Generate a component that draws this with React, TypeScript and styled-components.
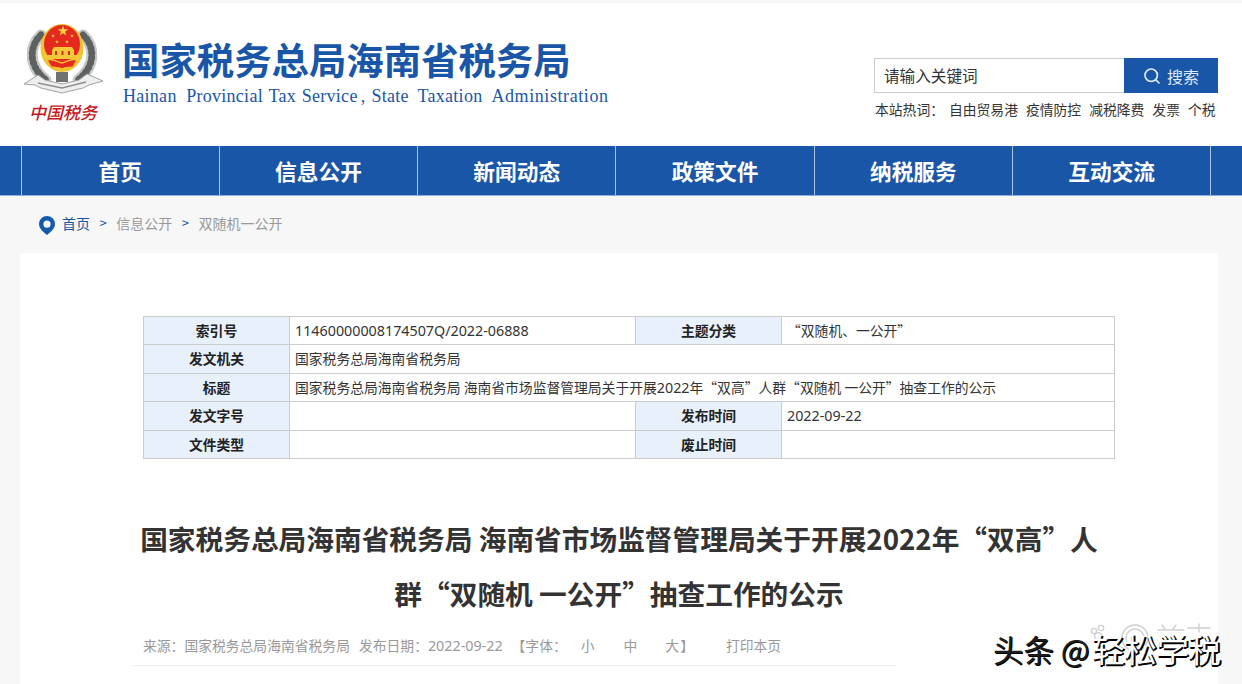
import React from 'react';
import styled, { createGlobalStyle } from 'styled-components';

const BLUE = '#1a56a8';
const FONT = '"Noto Sans CJK SC", "Noto Sans", sans-serif';

const GlobalStyle = createGlobalStyle`
  html, body {
    margin: 0;
    height: 684px;
    overflow: hidden;
    background: #f7f7f7;
    font-family: ${FONT};
  }
  * { box-sizing: border-box; }
`;

const Page = styled.div`
  position: relative;
  width: 1242px;
  height: 684px;
  overflow: hidden;
  padding-top: 3px;
`;

const Header = styled.header`
  height: 143px;
  background: #fff;
  display: flex;
  justify-content: space-between;
  padding: 17px 24px 0 21px;
`;

const Brand = styled.div`
  display: flex;
  gap: 17px;
`;

const LogoColumn = styled.div`
  width: 84px;
  display: flex;
  flex-direction: column;
  align-items: center;
`;

const LogoText = styled.div`
  font-size: 17px;
  line-height: 22px;
  font-weight: 500;
  font-style: italic;
  color: #c5181e;
  white-space: nowrap;
  margin-top: -1px;
`;

const BrandText = styled.div`
  padding-top: 16px;
`;

const BrandTitle = styled.div`
  font-size: 37.4px;
  line-height: 46px;
  font-weight: 700;
  color: ${BLUE};
  white-space: nowrap;
`;

const BrandSub = styled.div`
  font-family: "Liberation Serif", serif;
  font-size: 18px;
  line-height: 22px;
  letter-spacing: 0.28px;
  color: ${BLUE};
  white-space: nowrap;
  margin: 3px 0 0 1px;
`;

const SubPart = styled.span<{ $ws: number; $ls?: number; $left?: number; $right?: number }>`
  word-spacing: ${p => p.$ws}px;
  letter-spacing: ${p => p.$ls ?? 0.28}px;
  margin-left: ${p => p.$left ?? 0}px;
  margin-right: ${p => p.$right ?? 0}px;
`;

const SearchColumn = styled.div`
  width: 344px;
  padding-top: 38px;
`;

const SearchBox = styled.div`
  display: flex;
  height: 35px;
`;

const SearchInput = styled.div`
  flex: 1;
  border: 1px solid #ccc;
  border-right: none;
  font-size: 15.6px;
  line-height: 33px;
  padding-left: 9px;
  color: #333;
`;

const SearchButton = styled.div`
  width: 94px;
  background: ${BLUE};
  color: #dfe8f5;
  display: flex;
  align-items: center;
  justify-content: center;
  gap: 6px;
  font-size: 16px;
`;

const HotWords = styled.div`
  display: flex;
  margin-top: 6px;
  font-size: 13.8px;
  line-height: 20px;
  color: #333;
  white-space: nowrap;
`;

const HotLabel = styled.span`
  margin-left: 1px;
  margin-right: 5px;
`;

const HotWord = styled.span`
  margin-right: 8px;
`;

const Nav = styled.nav`
  height: 50px;
  background: ${BLUE};
  display: flex;
  padding-left: 20.5px;
  border-bottom: 1px solid #8fb0da;
`;

const NavItem = styled.div`
  width: 198.3px;
  border-left: 1px solid #a9c3e4;
  color: #fff;
  font-size: 21.7px;
  font-weight: 700;
  display: flex;
  align-items: center;
  justify-content: center;
  &:last-child {
    width: 31px;
  }
`;

const Breadcrumb = styled.div`
  height: 57px;
  display: flex;
  align-items: center;
  padding: 0 0 4px 39px;
  font-size: 14px;
  color: #999;
`;

const HomeLink = styled.span`
  color: ${BLUE};
  margin-left: 7px;
`;

const CrumbSep = styled.span`
  color: ${BLUE};
  margin: 0 9.5px;
  font-size: 13px;
`;

const PinSvg = styled.svg`
  margin-top: 6px;
`;

const Card = styled.main`
  margin: 0 24px 0 20px;
  height: 440px;
  background: #fff;
  padding: 63px 103px 0 113px;
`;

const InfoGrid = styled.div`
  display: grid;
  grid-template-columns: 146px 346px 146px 333px;
  grid-auto-rows: 28.4px;
  margin-left: 10px;
  width: 972px;
  border-top: 1px solid #ccc;
  border-left: 1px solid #ccc;
  font-size: 13.8px;
  color: #333;
`;

const Label = styled.div`
  background: #e8f0fc;
  border-right: 1px solid #ccc;
  border-bottom: 1px solid #ccc;
  text-align: center;
  font-weight: 700;
  line-height: 26px;
  color: #222;
`;

const Value = styled.div<{ $span?: number }>`
  grid-column: span ${p => p.$span ?? 1};
  border-right: 1px solid #ccc;
  border-bottom: 1px solid #ccc;
  padding-left: 5px;
  line-height: 27px;
  white-space: nowrap;
`;

const Num = styled.span`
  font-family: "Noto Sans", sans-serif;
  font-size: 14.3px;
`;

const Heading = styled.h1`
  margin: 52px 0 0;
  width: 972px;
  font-size: 27.7px;
  line-height: 55px;
  font-weight: 700;
  color: #333;
  text-align: center;
`;

const Meta = styled.div`
  margin-top: 4px;
  width: 763px;
  height: 41px;
  padding-left: 10px;
  display: flex;
  align-items: center;
  font-size: 13.8px;
  color: #999;
  border-bottom: 1px solid #eee;
  white-space: nowrap;
`;

const MetaItem = styled.span<{ $gap?: number }>`
  margin-right: ${p => p.$gap ?? 0}px;
`;

const Watermark = styled.div`
  position: absolute;
  left: 993px;
  top: 632px;
  font-size: 30.5px;
  line-height: 32px;
  font-weight: 400;
  color: #1d1d1d;
  white-space: nowrap;
  text-shadow: 1px 1px 0 #000, -1px -1px 0 #fff;
`;

const WatermarkName = styled.span`
  font-size: 32px;
  margin-left: 3px;
  color: #fff;
  text-shadow: 1px 1px 0 #000, 2px 1px 0 #000, 0 2px 0 #000;
`;

const WatermarkIcon = styled.svg`
  position: absolute;
  left: 1088px;
  top: 622px;
`;

const Star = ({ x, y, r }: { x: number; y: number; r: number }) => {
  const points = Array.from({ length: 10 }, (_, i) => {
    const a = (Math.PI / 5) * i - Math.PI / 2;
    const d = i % 2 ? r * 0.4 : r;
    return `${x + d * Math.cos(a)},${y + d * Math.sin(a)}`;
  }).join(' ');
  return <polygon points={points} fill="#f8d23c" />;
};

const Emblem = () => (
  <svg width="84" height="82" viewBox="0 0 84 82">
    {/* wreath */}
    <g fill="none" strokeLinecap="round">
      <path d="M20 15C8 26 7 46 25 60" stroke="#c6c8c7" strokeWidth="11" />
      <path d="M62 15C74 26 75 46 57 60" stroke="#c6c8c7" strokeWidth="11" />
      <path d="M20 15C8 26 7 46 25 60" stroke="#5d6261" strokeWidth="7" strokeDasharray="1 4" />
      <path d="M62 15C74 26 75 46 57 60" stroke="#5d6261" strokeWidth="7" strokeDasharray="1 4" />
    </g>
    {/* ribbon */}
    <path d="M3 64L17 55L24 60L41 64L58 60L66 54L82 61L68 65L62 68L41 73L20 68L14 65Z" fill="#eeeeee" stroke="#a3a3a3" strokeWidth="1" />
    <path d="M17 63L41 68L65 62" fill="none" stroke="#8f8f8f" strokeWidth="1.4" />
    <path d="M35 52h12v10h-12z" fill="#6f7172" />
    {/* badge */}
    <ellipse cx="41" cy="28" rx="21.5" ry="24" fill="#f2c230" />
    <ellipse cx="41" cy="24" rx="18" ry="19" fill="#e5291f" />
    <Star x={42} y={11} r={5.5} />
    <Star x={32} y={16} r={2} />
    <Star x={51} y={16} r={2} />
    <Star x={36} y={22} r={2} />
    <Star x={46} y={22} r={2} />
    {/* gate */}
    <path d="M33 27h18l2 3h-22zM31 30h22v5h-22z" fill="#f4c838" />
    <path d="M34 31h2v4h-2zM40.5 31h2v4h-2zM47 31h2v4h-2z" fill="#c9381e" />
    <path d="M23 35h38v4h-38z" fill="#f4c838" />
    {/* lower ornament */}
    <path d="M26 40c6-2 10 2 15 3 5-1 9-5 15-3l-4 7c-4 1-7 0-11 2-4-2-7-1-11-2z" fill="#e5291f" stroke="#f2c230" strokeWidth="1.5" />
  </svg>
);

const SearchIcon = () => (
  <svg width="18" height="18" viewBox="0 0 18 18" fill="none" stroke="#dfe8f5" strokeWidth="1.7">
    <circle cx="8.2" cy="8.2" r="6.2" />
    <path d="M12.8 12.8L16 16" strokeLinecap="round" />
  </svg>
);

const PinIcon = () => (
  <PinSvg width="16" height="19" viewBox="0 0 16 19">
    <path fillRule="evenodd" d="M8 0a8 8 0 0 1 8 8c0 4-4 8-8 11C4 16 0 12 0 8a8 8 0 0 1 8-8zm0 4.6a3.6 3.6 0 1 0 0 7.2 3.6 3.6 0 0 0 0-7.2z" fill="#1559ad" />
  </PinSvg>
);

const navItems = ['首页', '信息公开', '新闻动态', '政策文件', '纳税服务', '互动交流', ''];
const hotWords = ['自由贸易港', '疫情防控', '减税降费', '发票', '个税'];

export default function App() {
  return (
    <Page>
      <GlobalStyle />
      <Header>
        <Brand>
          <LogoColumn>
            <Emblem />
            <LogoText>中国税务</LogoText>
          </LogoColumn>
          <BrandText>
            <BrandTitle>国家税务总局海南省税务局</BrandTitle>
            <BrandSub>
              <SubPart $ws={4.7}>Hainan </SubPart>
              <SubPart $ws={1}>Provincial Tax Service</SubPart>
              <SubPart $ws={1.2} $left={3}>, </SubPart>
              <SubPart $ws={4.2}>State Taxation </SubPart>
              <SubPart $ws={0} $ls={0.58}>Administration</SubPart>
            </BrandSub>
          </BrandText>
        </Brand>
        <SearchColumn>
          <SearchBox>
            <SearchInput>请输入关键词</SearchInput>
            <SearchButton>
              <SearchIcon />
              搜索
            </SearchButton>
          </SearchBox>
          <HotWords>
            <HotLabel>本站热词：</HotLabel>
            {hotWords.map(w => (
              <HotWord key={w}>{w}</HotWord>
            ))}
          </HotWords>
        </SearchColumn>
      </Header>
      <Nav>
        {navItems.map((n, i) => (
          <NavItem key={i}>{n}</NavItem>
        ))}
      </Nav>
      <Breadcrumb>
        <PinIcon />
        <HomeLink>首页</HomeLink>
        <CrumbSep>&gt;</CrumbSep>
        信息公开
        <CrumbSep>&gt;</CrumbSep>
        双随机一公开
      </Breadcrumb>
      <Card>
        <InfoGrid>
          <Label>索引号</Label>
          <Value><Num>11460000008174507Q/2022-06888</Num></Value>
          <Label>主题分类</Label>
          <Value>“双随机、一公开”</Value>
          <Label>发文机关</Label>
          <Value $span={3}>国家税务总局海南省税务局</Value>
          <Label>标题</Label>
          <Value $span={3}>国家税务总局海南省税务局 海南省市场监督管理局关于开展<Num>2022</Num>年“双高”人群“双随机 一公开”抽查工作的公示</Value>
          <Label>发文字号</Label>
          <Value />
          <Label>发布时间</Label>
          <Value><Num>2022-09-22</Num></Value>
          <Label>文件类型</Label>
          <Value />
          <Label>废止时间</Label>
          <Value />
        </InfoGrid>
        <Heading>国家税务总局海南省税务局 海南省市场监督管理局关于开展2022年“双高”人群“双随机 一公开”抽查工作的公示</Heading>
        <Meta>
          <MetaItem $gap={9}>来源：国家税务总局海南省税务局</MetaItem>
          <MetaItem $gap={9}>发布日期：<Num>2022-09-22</Num></MetaItem>
          <MetaItem $gap={14}>【字体：</MetaItem>
          <MetaItem $gap={29}>小</MetaItem>
          <MetaItem $gap={28}>中</MetaItem>
          <MetaItem $gap={1}>大</MetaItem>
          <MetaItem $gap={32}>】</MetaItem>
          <MetaItem>打印本页</MetaItem>
        </Meta>
      </Card>
      <WatermarkIcon width="130" height="34" viewBox="0 0 130 34" fill="none" stroke="#cfcfcf" strokeWidth="1.4">
        <circle cx="6" cy="9" r="2.6" />
        <circle cx="13" cy="6" r="2.6" />
        <circle cx="10" cy="14" r="3.4" />
        <circle cx="47" cy="16" r="13" />
        <circle cx="47" cy="16" r="9" />
        <path d="M70 8h26M74 3l3 4M88 3l-3 4M100 6h22M111 2v8" strokeLinecap="round" />
      </WatermarkIcon>
      <Watermark>头条 @<WatermarkName>轻松学税</WatermarkName></Watermark>
    </Page>
  );
}
